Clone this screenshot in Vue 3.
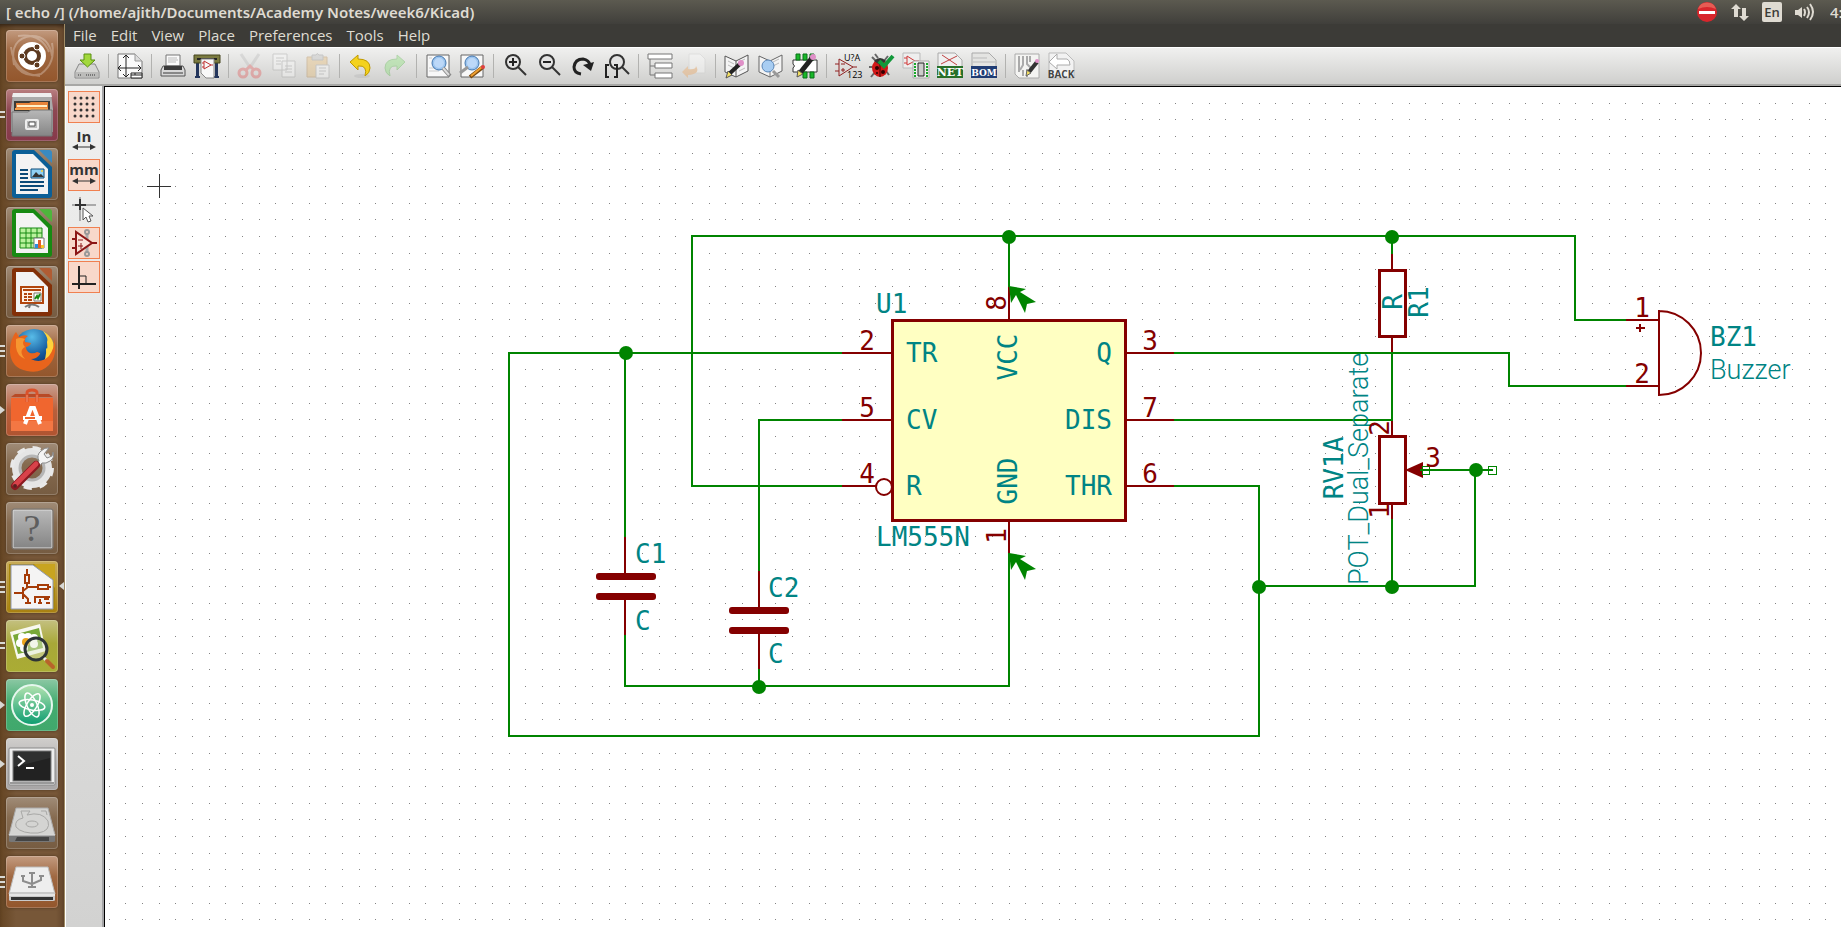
<script setup>
const menus = ['File', 'Edit', 'View', 'Place', 'Preferences', 'Tools', 'Help']

// Grid dots: three steps to every 50 px
let grid = ''
for (let r = 0; r < 130; r++) {
  for (let c = 0; c < 240; c++) {
    grid += `M${109 + Math.floor((c * 50) / 3)} ${103 + Math.floor((r * 50) / 3)}h1v1h-1z`
  }
}

const junctions = [
  [1009, 237], [1392, 237], [626, 353], [1476, 470], [1392, 587], [1259, 587], [759, 687],
]

const labels = [
  { t: 'U1', x: 876, y: 313 },
  { t: 'LM555N', x: 876, y: 546 },
  { t: 'TR', x: 906, y: 362 },
  { t: 'CV', x: 906, y: 429 },
  { t: 'R', x: 906, y: 495 },
  { t: 'Q', x: 1112, y: 362, a: 'end' },
  { t: 'DIS', x: 1112, y: 429, a: 'end' },
  { t: 'THR', x: 1112, y: 495, a: 'end' },
  { t: 'C1', x: 635, y: 563 },
  { t: 'C', x: 635, y: 630 },
  { t: 'C2', x: 768, y: 597 },
  { t: 'C', x: 768, y: 663 },
  { t: 'BZ1', x: 1710, y: 346 },
]
const turned = [
  { t: 'VCC', x: 1017, y: 357 },
  { t: 'GND', x: 1017, y: 481 },
  { t: 'R', x: 1402, y: 302 },
  { t: 'R1', x: 1428, y: 302 },
  { t: 'RV1A', x: 1343, y: 468 },
]
const pins = [
  { t: '2', x: 867, y: 350 }, { t: '5', x: 867, y: 417 }, { t: '4', x: 867, y: 483 },
  { t: '3', x: 1150, y: 350 }, { t: '7', x: 1150, y: 417 }, { t: '6', x: 1150, y: 483 },
  { t: '3', x: 1433, y: 467 }, { t: '1', x: 1642, y: 317 }, { t: '2', x: 1642, y: 383 },
]
const turnedPins = [
  { t: '8', x: 1006, y: 303 }, { t: '1', x: 1006, y: 536 },
  { t: '2', x: 1389, y: 428 }, { t: '1', x: 1389, y: 511 },
]
const turn = (p) => `translate(${p.x} ${p.y}) rotate(-90)`
</script>

<template>
  <div class="desktop">
    <header class="topbar">
      <h1 class="title">[ echo /] (/home/ajith/Documents/Academy Notes/week6/Kicad)</h1>
      <div class="tray">
        <svg width="22" height="24" viewBox="0 0 22 24">
          <circle cx="11" cy="12" r="10" fill="#d8262c" /><path d="M2 9a9.500 9.500 0 0 1 18 0q-9-4-18 0z" fill="#f08070" opacity=".6" />
          <rect x="3" y="11" width="16" height="3" fill="#fff" />
        </svg>
        <svg width="20" height="24" viewBox="0 0 20 24" fill="#dfdbd2">
          <path d="M6 4l5 5H8v8H4V9H1zM14 21l-5-5h3V8h4v8h3z" />
        </svg>
        <span class="lang">En</span>
        <svg width="22" height="24" viewBox="0 0 22 24" fill="none" stroke="#dfdbd2" stroke-width="2">
          <path d="M1 10h3l4-3v11l-4-3H1z" fill="#dfdbd2" stroke="none" />
          <path d="M10 9q2 3 0 7M13 7q4 5 0 11M16 4q6 8 0 16" />
        </svg>
        <span class="clock">4:</span>
      </div>
    </header>

    <div class="body">
      <nav class="launcher" aria-label="Launcher">
        <button class="tile copper" aria-label="Dash">
          <svg viewBox="0 0 52 52">
            <g fill="none" stroke="#fff" stroke-opacity=".28" stroke-width="2"><path d="M8 35Q3 8 26 6q17 0 20 20M46 13q4 20-11 31Q17 49 8 33M12 6Q35 3 43 22M5 17q3 27 29 29" /></g>
            <circle cx="26" cy="26" r="14" fill="#fff" />
            <circle cx="26" cy="26" r="7" fill="none" stroke="#5d3a20" stroke-width="4" />
            <g fill="#5d3a20" stroke="#fff"><circle cx="16" cy="26" r="3" /><circle cx="31" cy="17" r="3" /><circle cx="31" cy="35" r="3" /></g>
          </svg>
        </button>
        <button class="tile wine" aria-label="Files">
          <i class="pips two"></i>
          <svg viewBox="0 0 52 52">
            <path d="M7 4h38l2 16v23H5V20z" fill="#aaa" /><path d="M7 4h38l1 4H6z" fill="#eee" />
            <path d="M8 12h36v10H8z" fill="#3b3a36" /><path d="M10 14h13l2-1h17v8H10z" fill="#e8843a" /><path d="M11 17h30" stroke="#fff0c8" stroke-width="2" /><path d="M9 20h33" stroke="#f6a04c" stroke-width="2" />
            <path d="M6 23h16l3-2h21v26H6z" fill="url(#steel)" stroke="#777" />
            <rect x="20" y="31" width="12" height="9" rx="1" fill="#bbb" stroke="#eee" stroke-width="2" /><path d="M23 33h6v4h-6z" fill="#fff" stroke="#555" />
          </svg>
        </button>
        <button class="tile" aria-label="Writer">
          <svg viewBox="0 0 52 52">
            <path d="M9 2h19l18 17v28q0 3-3 3H9q-3 0-3-3V5q0-3 3-3z" fill="#0b5f97" /><path d="M33 2h10q3 0 3 3v10z" fill="#3a8ac0" />
            <path d="M10 6h17l15 15v25H10z" fill="#f3f3f3" />
            <path d="M14 22h8M14 26h8M14 30h8M14 34h24M14 38h24M14 42h18" stroke="#0b4a78" stroke-width="2" />
            <path d="M25 21h13v9H25z" fill="#8fd0f4" stroke="#0b4a78" /><path d="M26 29l4-5 3 3 2-1 3 3z" fill="#333" /><circle cx="36" cy="23" r="1" fill="#fc3" />
          </svg>
        </button>
        <button class="tile" aria-label="Calc">
          <svg viewBox="0 0 52 52">
            <path d="M9 2h19l18 17v28q0 3-3 3H9q-3 0-3-3V5q0-3 3-3z" fill="#178a12" /><path d="M33 2h10q3 0 3 3v10z" fill="#4fb53c" />
            <path d="M10 6h17l15 15v25H10z" fill="#f3f3f3" />
            <path d="M14 21h22v20H14z" fill="#b9f29c" stroke="#178a12" /><path d="M14 26h22M14 31h22M14 36h22M20 21v20M25 21v20M31 21v20" stroke="#178a12" />
            <path d="M28 31h10v10H28z" fill="#fff" stroke="#777" /><path d="M29 37h3v4h-3z" fill="#2a8ee0" /><path d="M32 33h3v8h-3z" fill="#e4602a" /><path d="M35 38h3v3h-3z" fill="#f7c52a" />
          </svg>
        </button>
        <button class="tile" aria-label="Impress">
          <svg viewBox="0 0 52 52">
            <path d="M9 2h19l18 17v28q0 3-3 3H9q-3 0-3-3V5q0-3 3-3z" fill="#833008" /><path d="M33 2h10q3 0 3 3v10z" fill="#b05c33" />
            <path d="M10 6h17l15 15v25H10z" fill="#f3f3f3" />
            <path d="M15 21h22v16H15z" fill="#fff3e8" stroke="#b2460e" stroke-width="2" /><path d="M17 24h18M18 28h3M18 31h3M18 34h3M22 28h4M22 31h4M22 34h4" stroke="#b2460e" stroke-width="2" />
            <path d="M28 27h7v8h-7z" fill="#fff" stroke="#777" /><path d="M29 33l2-3 1 2 2-4" fill="none" stroke="#178a12" stroke-width="2" />
            <path d="M19 41q7-5 14 0M24 39l-1 3" fill="none" stroke="#777" stroke-width="2" />
          </svg>
        </button>
        <button class="tile copper" aria-label="Firefox">
          <i class="pips"></i>
          <svg viewBox="0 0 52 52">
            <circle cx="28" cy="24" r="20" fill="url(#globe)" />
            <path d="M37 6q14 8 10 23-3 11-12 14 6-10 5-20 2 3 1-6 2-3-4-11z" fill="#ffd23c" />
            <path d="M7 12q1-3 3-5l3 5q5-3 9-1-4 2-3 6l6 1q-1 3-5 4 0 4 4 6 4 1 7-1 4 1 3 2-3 5-9 5 10 5 18-3 6-8 5-18 4 17-5 27-9 9-22 6Q5 43 4 27q0-9 3-15z" fill="#e8641c" />
            <path d="M10 14q4-2 9 0-4 4 0 8-7 4 0 12-8-3-9-12z" fill="#f79630" />
          </svg>
        </button>
        <button class="tile salmon" aria-label="Software">
          <i class="arrow"></i>
          <svg viewBox="0 0 52 52">
            <path d="M5 13l4-3h34l4 3z" fill="#b84a26" /><path d="M5 14h42v33H5z" fill="#f0662f" /><path d="M5 37h42v10H5z" fill="#f47c48" opacity=".8" />
            <path d="M21 18v-9q0-3 5-3t5 3v9" fill="none" stroke="#d9512a" stroke-width="3" /><path d="M21 18v-7M31 18v-7" stroke="#f7956c" />
            <path d="M19 40l6-16h3l6 16M17 34h19" fill="none" stroke="#fff" stroke-width="4" /><path d="M19 34h10" stroke="#f0662f" stroke-width="2" />
          </svg>
        </button>
        <button class="tile" aria-label="Settings">
          <svg viewBox="0 0 52 52">
            <circle cx="26" cy="25" r="16" fill="none" stroke="#e5e5e5" stroke-width="8" />
            <circle cx="26" cy="25" r="20" fill="none" stroke="#e9e9e9" stroke-width="4" stroke-dasharray="8 7.700" />
            <circle cx="26" cy="25" r="12" fill="none" stroke="#b5b5b5" stroke-width="3" />
            <path d="M29 23l4-5q-3-6 2-10 4-4 8-3l-5 6 3 4 5-2 1-4q2 6-3 9-4 3-8 2l-4 5z" fill="#f4f4f4" stroke="#888" />
            <path d="M9 43L30 22" stroke="#8a1a20" stroke-width="8" stroke-linecap="round" /><path d="M9 42L30 21" stroke="#d8424a" stroke-width="5" stroke-linecap="round" /><circle cx="9" cy="43" r="2" fill="#5c2020" />
          </svg>
        </button>
        <button class="tile" aria-label="Unknown application">
          <svg viewBox="0 0 52 52">
            <rect x="7" y="8" width="39" height="38" rx="1" fill="url(#steel)" stroke="#ddd" /><rect x="6" y="7" width="41" height="40" rx="2" fill="none" stroke="#777" />
            <text x="26" y="39" text-anchor="middle" font-family="Liberation Serif, serif" font-size="38" fill="#5e5e5e">?</text>
          </svg>
        </button>
        <button class="tile gold" aria-label="Schematic editor">
          <i class="pips"></i><i class="active-mark"></i>
          <svg viewBox="0 0 52 52">
            <path d="M3 3h46v46H3z" fill="#a8860c" /><path d="M28 3h21v24z" fill="#c8a420" /><path d="M5 4h22l20 15v29H5z" fill="#f4f4f4" stroke="#8f98ae" />
            <g fill="none" stroke="#a63c08" stroke-width="2"><path d="M21 8v6M19 14h4v8h-4zM21 22v6M17 26v12M8 32h9M17 30l5-4h10M32 24h10v4H32zM42 26h3M17 33l5 5v4M19 42h6M29 42v-6h15M34 38v4M38 38h5M32 42h4M40 42h4" /></g>
          </svg>
        </button>
        <button class="tile olive" aria-label="Image viewer">
          <i class="pips two"></i>
          <svg viewBox="0 0 52 52">
            <path d="M4 12l30-8 6 27-29 8z" fill="#f8f8f0" /><path d="M7 15l26-7 4 20-25 6z" fill="#78a838" />
            <g fill="#fff"><circle cx="16" cy="17" r="4" /><circle cx="22" cy="17" r="4" /><circle cx="28" cy="18" r="4" /><circle cx="14" cy="23" r="4" /><circle cx="18" cy="28" r="4" /><circle cx="28" cy="24" r="4" /></g>
            <circle cx="20" cy="22" r="4" fill="#eca41c" />
            <circle cx="30" cy="29" r="11" fill="#dfe8d0" fill-opacity=".45" stroke="#2e3436" stroke-width="3" /><path d="M38 38l4 4" stroke="#eee" stroke-width="3" /><path d="M41 41l6 6" stroke="#b8642a" stroke-width="4" stroke-linecap="round" />
          </svg>
        </button>
        <button class="tile green" aria-label="Atom">
          <i class="arrow"></i>
          <svg viewBox="0 0 52 52">
            <circle cx="26" cy="26" r="20" fill="url(#atom)" stroke="#e6f7ee" stroke-width="2" />
            <g fill="none" stroke="#fff" stroke-width="1.500"><ellipse cx="26" cy="26" rx="13" ry="5" transform="rotate(10 26 26)" /><ellipse cx="26" cy="26" rx="13" ry="5" transform="rotate(65 26 26)" /><ellipse cx="26" cy="26" rx="13" ry="5" transform="rotate(122 26 26)" /></g>
            <circle cx="26" cy="26" r="2" fill="#fff" />
          </svg>
        </button>
        <button class="tile silver" aria-label="Terminal">
          <i class="arrow"></i>
          <svg viewBox="0 0 52 52">
            <rect x="3" y="10" width="46" height="37" rx="1" fill="#eee" stroke="#888" /><path d="M4 45h44" stroke="#999" stroke-width="2" />
            <rect x="7" y="13" width="38" height="30" fill="#2f3030" stroke="#777" /><path d="M8 29L44 20v22H8z" fill="#222" />
            <path d="M12 18l6 5-6 5M20 30h8" fill="none" stroke="#fff" stroke-width="2" />
          </svg>
        </button>
        <button class="tile" aria-label="Hard disk">
          <svg viewBox="0 0 52 52">
            <path d="M10 11h32l7 27H3z" fill="#d4d4d2" stroke="#aaa" /><path d="M3 38h46v6q0 1-2 1H5q-2 0-2-1z" fill="#777" /><path d="M11 40h32v4H9z" fill="#444" /><path d="M3 38h46" stroke="#eee" />
            <g fill="none" stroke="#a8a8a6"><path d="M21 18q15-4 21 6 3 10-10 12-16 1-22-6-2-7 7-9l-2-7h9zM35 14h5l1 4" /><ellipse cx="26" cy="27" rx="6" ry="3" /></g>
          </svg>
        </button>
        <button class="tile copper" aria-label="USB drive">
          <i class="pips"></i>
          <svg viewBox="0 0 52 52">
            <path d="M10 11h32l7 27H3z" fill="#eee" stroke="#bbb" /><path d="M3 36h46v8q0 1-2 1H5q-2 0-2-1z" fill="#c9c9c9" /><path d="M5 41h42v3H5z" fill="#333" /><path d="M3 39h46" stroke="#fff" />
            <g fill="none" stroke="#8d8d8d" stroke-width="2"><path d="M26 30V16M22 31h8M26 28l-9-3v-5M26 28l9-4v-4M23 17h6M15 20h4M33 20h5" /></g>
          </svg>
        </button>
      </nav>

      <div class="window">
        <nav class="menubar" aria-label="Menu">
          <button v-for="m in menus" :key="m">{{ m }}</button>
        </nav>

        <div class="toolbar" role="toolbar" aria-label="Main tools">
          <button aria-label="Save"><svg viewBox="0 0 26 26"><path d="M5 11h16l4 8v6H1v-6z" fill="#d6d6d4" stroke="#888" /><path d="M2 19h22v5H2z" fill="#bcbcba" /><path d="M12 22h10M4 22h3" stroke="#777" stroke-dasharray="1 1" stroke-width="2" /><path d="M10 1h7v6h4l-7.500 7L6 7h4z" fill="#a2d83c" stroke="#5a9010" /></svg></button>
          <hr />
          <button aria-label="Page settings"><svg viewBox="0 0 26 26"><path d="M1 1h17l7 7v17H1z" fill="#fafafa" stroke="#777" /><path d="M18 1v7h7" fill="#ddd" stroke="#999" /><path d="M9 2v22M1 15h23M6 5l3-3 3 3M6 21l3 3 3-3M4 12l-3 3 3 3M21 12l3 3-3 3" fill="none" stroke="#222" /><path d="M14 20h11v5H14zM14 22h11M18 20v2" fill="#fff" stroke="#222" /></svg></button>
          <hr />
          <button aria-label="Print"><svg viewBox="0 0 26 26"><path d="M6 2h14v11H6z" fill="#fafafa" stroke="#777" /><path d="M8 5h9M8 7h10M8 9h8" stroke="#bbb" /><path d="M3 13h20l2 4v6H1v-6z" fill="#d8d8d8" stroke="#555" /><path d="M4 13h18v4H4z" fill="#3a3a3a" /><path d="M3 20h20" stroke="#888" stroke-width="2" /></svg></button>
          <button aria-label="Plot"><svg viewBox="0 0 26 26"><path d="M2 10h3v13h1v2H1v-2h1zM21 10h3v13h1v2h-5v-2h1z" fill="#24365c" /><path d="M0 2h26v8H0z" fill="#7a7a40" stroke="#44441c" /><path d="M3 6h20" stroke="#222" stroke-width="2" /><path d="M7 6h13v19h-8l-5-5z" fill="#f8f8f8" stroke="#888" /><path d="M10 8v8l7-4zM8 10h2M8 14h2M17 12h2" fill="none" stroke="#c03030" /></svg></button>
          <hr />
          <button class="off" aria-label="Cut"><svg viewBox="0 0 26 26"><path d="M4 1l10 15M22 1L12 16" stroke="#b8b8b8" stroke-width="3" /><circle cx="6" cy="20" r="4" fill="none" stroke="#e25050" stroke-width="3" /><circle cx="19" cy="20" r="4" fill="none" stroke="#e25050" stroke-width="3" /><path d="M9 17l4-4 4 4" fill="none" stroke="#e25050" stroke-width="3" /></svg></button>
          <button class="off" aria-label="Copy"><svg viewBox="0 0 26 26"><path d="M2 1h14v16H2zM11 8h13v16H11z" fill="#fff" stroke="#999" /><path d="M5 5h8M5 8h5M5 11h5M14 13h7M14 16h7M14 19h7" stroke="#999" /></svg></button>
          <button class="off" aria-label="Paste"><svg viewBox="0 0 26 26"><path d="M2 4h20v20H2z" fill="#e8b86a" stroke="#b08040" /><path d="M7 2h4q1-3 3 0h4v5H7z" fill="#bbb" stroke="#888" /><path d="M11 12h13v13H11z" fill="#fff" stroke="#999" /><path d="M14 15h7M14 18h7M14 21h5" stroke="#999" /></svg></button>
          <hr />
          <button aria-label="Undo"><svg viewBox="0 0 26 26"><ellipse cx="14" cy="23" rx="8" ry="2" fill="#bbb" opacity=".5" /><path d="M2 9l8-7v4q12 0 12 9 0 5-5 8 3-11-7-10v4z" fill="#f4d21c" stroke="#c09a00" /></svg></button>
          <button class="off" aria-label="Redo"><svg viewBox="0 0 26 26"><path d="M23 9l-8-7v4Q3 6 3 15q0 5 5 8-3-11 7-10v4z" fill="#7ee06a" stroke="#50b040" /></svg></button>
          <hr />
          <button aria-label="Find"><svg viewBox="0 0 26 26"><path d="M2 2h22v22H2z" fill="#f8f8f8" stroke="#666" stroke-width="1" /><path d="M4 5h3M4 15h6M4 18h10" stroke="#ccc" /><circle cx="14" cy="10" r="7" fill="#9cc4ee" stroke="#4478b0" /><circle cx="14" cy="10" r="5" fill="#bcd8f8" /><path d="M18 15l7 8" stroke="#888" stroke-width="4" /><path d="M18 15l6 7" stroke="#ddd" stroke-width="2" /></svg></button>
          <button aria-label="Find and replace"><svg viewBox="0 0 26 26"><path d="M2 2h22v22H2z" fill="#f8f8f8" stroke="#666" stroke-width="1" /><circle cx="13" cy="10" r="7" fill="#9cc4ee" stroke="#4478b0" /><circle cx="13" cy="10" r="5" fill="#bcd8f8" /><path d="M9 14l-8 6" stroke="#999" stroke-width="3" /><path d="M11 24l13-10" stroke="#7a4a10" stroke-width="4" /><path d="M12 23l11-9" stroke="#f0a030" stroke-width="2" /><circle cx="24" cy="14" r="2" fill="#e04040" /></svg></button>
          <hr />
          <button aria-label="Zoom in"><svg viewBox="0 0 26 26"><circle cx="11" cy="9" r="7" fill="#e4e4e4" stroke="#333" stroke-width="2" /><path d="M16 14l8 8" stroke="#333" stroke-width="2" /><path d="M7 9h8M11 5v8" stroke="#222" stroke-width="2" /></svg></button>
          <button aria-label="Zoom out"><svg viewBox="0 0 26 26"><circle cx="11" cy="9" r="7" fill="#e4e4e4" stroke="#333" stroke-width="2" /><path d="M16 14l8 8" stroke="#333" stroke-width="2" /><path d="M7 9h8" stroke="#222" stroke-width="2" /></svg></button>
          <button aria-label="Refresh"><svg viewBox="0 0 26 26"><path d="M11 21q-7-1-7-7 1-8 9-8 6 1 7 6" fill="none" stroke="#222" stroke-width="3" /><path d="M13 12l11-3-3 9z" fill="#222" /></svg></button>
          <button aria-label="Zoom to fit"><svg viewBox="0 0 26 26"><circle cx="13" cy="9" r="7" fill="#e4e4e4" stroke="#333" stroke-width="2" /><path d="M18 14l7 7" stroke="#333" stroke-width="2" /><path d="M5 12H2v12h3M10 12h3v12h-3" fill="none" stroke="#222" stroke-width="2" /></svg></button>
          <hr />
          <button aria-label="Hierarchy"><svg viewBox="0 0 26 26"><path d="M3 6v16h5M3 13h5" fill="none" stroke="#777" /><path d="M1 1h24v5H1zM8 10h17v5H8zM8 20h17v5H8z" fill="#fff" stroke="#777" /></svg></button>
          <button class="off" aria-label="Leave sheet"><svg viewBox="0 0 26 26"><path d="M8 1h11l5 5v14H8z" fill="#fff" stroke="#ccc" /><path d="M1 19l6-6v3q8 1 8-3 5 8-8 9v3z" fill="#f0a050" /></svg></button>
          <hr />
          <button aria-label="Library editor"><svg viewBox="0 0 26 26"><path d="M1 3l11 5 12-6v16l-12 6L1 19z" fill="#f4f4f4" stroke="#555" /><path d="M12 8v16" stroke="#555" /><path d="M4 8l6 3M4 12l6 3M15 9l6-3M15 18l6-3" stroke="#bbb" /><path d="M5 21L17 10" stroke="#222" stroke-width="4" /><path d="M2 25l2-7 4 4z" fill="#f4e060" stroke="#555" /><circle cx="17" cy="10" r="3" fill="#e090c8" /></svg></button>
          <button aria-label="Library browser"><svg viewBox="0 0 26 26"><path d="M1 3l11 5 12-6v16l-12 6L1 19z" fill="#f4f4f4" stroke="#666" /><path d="M12 8v16" stroke="#777" /><path d="M15 9l6-3M15 13l6-3" stroke="#bbb" /><circle cx="10" cy="13" r="6" fill="#a8cdf2" stroke="#5a86b8" /><path d="M15 18l6 6" stroke="#999" stroke-width="3" /></svg></button>
          <button aria-label="Footprint editor"><svg viewBox="0 0 26 26"><path d="M1 7h24v12H1v-4q3-2 0-4z" fill="#fff" stroke="#333" /><path d="M4 1h4v6H4zM11 1h4v6h-4zM18 1h4v6h-4zM11 19h4v6h-4zM18 19h4v6h-4z" fill="#18b828" stroke="#087018" /><path d="M8 20L20 5" stroke="#222" stroke-width="5" /><path d="M5 24l1-7 5 4z" fill="#f4e060" stroke="#555" /><circle cx="21" cy="4" r="3" fill="#e090c8" /></svg></button>
          <hr />
          <button aria-label="Annotate"><svg viewBox="0 0 26 26"><path d="M4 6v17l14-9zM0 11h4M0 18h4M18 14h4M6 11h4M6 17h4M8 15v4" fill="none" stroke="#902020" /><text x="9" y="8" class="tiny">U?A</text><text x="12" y="25" class="tiny">123</text></svg></button>
          <button aria-label="Rules check"><svg viewBox="0 0 26 26"><path d="M3 4l5 5M19 3l-4 5M0 14h6M2 24l4-5M20 22l-3-4M6 1l3 4" stroke="#666" stroke-width="2" /><ellipse cx="11" cy="15" rx="8" ry="9" fill="#d01818" /><path d="M5 8q6-6 12 0l-6 4z" fill="#333" /><path d="M11 10v14" stroke="#400" /><circle cx="8" cy="15" r="2" fill="#300" /><circle cx="8" cy="20" r="1" fill="#300" /><circle cx="14" cy="19" r="2" fill="#300" /><path d="M10 8l5 5 9-10" fill="none" stroke="#12983a" stroke-width="4" /></svg></button>
          <button aria-label="Assign footprints"><svg viewBox="0 0 26 26"><path d="M0 0h17v15H0z" fill="#eee" stroke="#bbb" /><path d="M4 3v9l8-4zM1 5h3M1 10h3M12 8h4" fill="none" stroke="#d03838" /><path d="M10 8h16v17H10z" fill="#f0f0f0" stroke="#aaa" /><path d="M15 10h6v13h-6z" fill="#ccc" stroke="#222" /><path d="M12 10v14M24 10v14" stroke="#18a828" stroke-width="2" stroke-dasharray="2 1" /></svg></button>
          <button aria-label="Netlist"><svg viewBox="0 0 26 26"><path d="M1 0h17l7 7v8H1z" fill="#f0f0f0" stroke="#aaa" /><path d="M5 2l15 10M4 11l16-8" stroke="#c04040" /><path d="M0 13h26v12H0z" fill="#287028" /><text x="13" y="23" class="plate" text-anchor="middle">NET</text></svg></button>
          <button aria-label="Bill of materials"><svg viewBox="0 0 26 26"><path d="M1 0h17l7 7v8H1z" fill="#e4e4e2" stroke="#aaa" /><path d="M2 5h14M2 9h22" stroke="#bbb" /><path d="M0 13h26v12H0z" fill="#203c74" /><text x="13" y="23" class="plate bom" text-anchor="middle">BOM</text></svg></button>
          <hr />
          <button aria-label="Board editor"><svg viewBox="0 0 26 26"><path d="M1 1h24v24H5l-4-4z" fill="#f4f4f2" stroke="#aaa" /><path d="M5 3v16M9 3v9l-3 5M13 3v8l4 4M9 17v6M13 16v8M16 3v6" fill="none" stroke="#aaa" stroke-width="2" /><path d="M15 19l8-10" stroke="#333" stroke-width="4" /><path d="M12 23l1-6 4 3z" fill="#f4e060" stroke="#666" /><circle cx="23" cy="8" r="2" fill="#e090c8" /></svg></button>
          <button aria-label="Back import"><svg viewBox="0 0 26 26"><path d="M1 0h17l8 8v17H1z" fill="#f2f2f2" stroke="#bbb" /><path d="M1 9l8-8v5h10q3 1 3 6H9v4z" fill="#fff" stroke="#aaa" /><text x="13" y="25" class="back" text-anchor="middle">BACK</text></svg></button>
        </div>

        <div class="work">
          <div class="options" role="toolbar" aria-label="Options">
            <button class="on" aria-label="Grid"><svg viewBox="0 0 30 30"><path d="M6 6h19M6 12h19M6 18h19M6 24h19" stroke="#333" stroke-width="3" stroke-linecap="round" stroke-dasharray="0 6" /></svg></button>
            <button aria-label="Inches"><svg viewBox="0 0 30 30"><text x="15" y="16" class="unit" text-anchor="middle">In</text><path d="M5 21h20" stroke="#333" /><path d="M3 21l6-3v6zM27 21l-6-3v6z" fill="#333" /></svg></button>
            <button class="on" aria-label="Millimetres"><svg viewBox="0 0 30 30"><text x="15" y="15" class="unit" text-anchor="middle">mm</text><path d="M5 21h20" stroke="#333" /><path d="M3 21l6-3v6zM27 21l-6-3v6z" fill="#333" /></svg></button>
            <button aria-label="Cursor shape"><svg viewBox="0 0 30 30"><path d="M3 11h24M11 3v24" stroke="#aaa" stroke-width="2" /><path d="M6 11h11M11 5v11" stroke="#333" stroke-width="2" /><path d="M14 14v12l3-3 2 5 3-1-2-5h4z" fill="#fff" stroke="#555" /></svg></button>
            <button class="on" aria-label="Hidden pins"><svg viewBox="0 0 30 30"><path d="M18 5v20" stroke="#aaa" stroke-width="3" /><circle cx="18" cy="4" r="2" fill="none" stroke="#999" stroke-width="2" /><circle cx="18" cy="26" r="2" fill="none" stroke="#999" stroke-width="2" /><path d="M7 4v22l16-11zM3 11h4M3 20h4M23 15h5" fill="#fbe4da" stroke="#8c1616" stroke-width="2" /><path d="M9 12h5M9 18h5M12 15v6" stroke="#8c1616" /></svg></button>
            <button class="on" aria-label="Orthogonal wires"><svg viewBox="0 0 30 30"><path d="M10 4v23M3 22h24" stroke="#222" stroke-width="2" /><path d="M10 14h7v8" fill="none" stroke="#222" /></svg></button>
          </div>

          <main class="sheet">
            <svg class="drawing" role="img" aria-label="Schematic">
              <g transform="translate(-105 -87)">
                <path :d="grid" class="dots" />
                <path class="cursor" d="M147 186h24M159 174v24" />

                <g class="wires">
                  <path d="M842 486H692V236H1575V320H1626" />
                  <path d="M842 353H509V736H1259V486H1174" />
                  <path d="M625 353V537M625 635V686H1009V553M1009 236V287" />
                  <path d="M842 420H759V571M759 669V686" />
                  <path d="M1174 353H1509V386H1626M1174 420H1392V353M1392 236V254" />
                  <path d="M1392 519V586M1259 586H1475V470M1425 470H1493" />
                </g>

                <g class="parts">
                  <path d="M842 353H892M842 420H892M842 486H876M1127 353H1174M1127 420H1174M1127 486H1174" />
                  <path d="M1009 287V320M1009 521V553" />
                  <path d="M625 537V574M625 599V635M759 571V608M759 633V669" />
                  <path d="M1392 254V270M1392 337V352M1392 421V436M1392 504V519" />
                  <path d="M1626 320H1659M1626 386H1659M1659 310V395A42 42 0 0 0 1659 311M1636 328H1645M1640 324V332" />
                  <circle cx="884" cy="487" r="8" />
                </g>
                <g class="solid">
                  <rect x="891" y="319" width="236" height="203" />
                  <rect x="1378" y="269" width="29" height="69" />
                  <rect x="1378" y="435" width="29" height="70" />
                  <rect x="596" y="573" width="60" height="7" rx="3" />
                  <rect x="596" y="593" width="60" height="7" rx="3" />
                  <rect x="729" y="607" width="60" height="7" rx="3" />
                  <rect x="729" y="627" width="60" height="7" rx="3" />
                  <path d="M1405 470l18-8v16z" />
                </g>
                <rect class="chip" x="894" y="322" width="230" height="197" />
                <rect class="hollow" x="1381" y="272" width="23" height="63" />
                <rect class="hollow" x="1381" y="438" width="23" height="64" />

                <g class="marks">
                  <circle v-for="(j, i) in junctions" :key="i" :cx="j[0]" :cy="j[1]" r="7" />
                  <path v-for="y in [286, 553]" :key="y" :transform="`translate(1009 ${y})`" d="M0 0L17 3 11 6 27 16 18 18 16 27 7 9 2 17z" />
                </g>
                <path class="wires" d="M1420 470H1430" />
                <g class="ends">
                  <rect x="1422" y="466" width="7" height="8" />
                  <rect x="1488" y="466" width="8" height="8" />
                </g>

                <g class="label">
                  <text v-for="(l, i) in labels" :key="i" :x="l.x" :y="l.y" :text-anchor="l.a || 'start'">{{ l.t }}</text>
                  <text v-for="(l, i) in turned" :key="'t' + i" :transform="turn(l)" text-anchor="middle">{{ l.t }}</text>
                  <text class="word" x="1710" y="379">Buzzer</text>
                  <text class="word" transform="translate(1368 469) rotate(-90)" text-anchor="middle">POT_Dual_Separate</text>
                </g>
                <g class="pin">
                  <text v-for="(p, i) in pins" :key="i" :x="p.x" :y="p.y">{{ p.t }}</text>
                  <text v-for="(p, i) in turnedPins" :key="'t' + i" :transform="turn(p)">{{ p.t }}</text>
                </g>
              </g>
            </svg>
          </main>
        </div>
      </div>
    </div>

    <svg class="defs" width="0" height="0" aria-hidden="true">
      <linearGradient id="steel" x1="0" y1="0" x2="0" y2="1"><stop offset="0" stop-color="#b8b8b8" /><stop offset="1" stop-color="#858585" /></linearGradient>
      <radialGradient id="globe" cx=".45" cy=".2" r=".8"><stop offset="0" stop-color="#58bce8" /><stop offset=".6" stop-color="#14589c" /><stop offset="1" stop-color="#0a2c60" /></radialGradient>
      <linearGradient id="atom" x1="0" y1="0" x2="0" y2="1"><stop offset="0" stop-color="#b4e4b0" /><stop offset="1" stop-color="#0c9c70" /></linearGradient>
    </svg>
  </div>
</template>

<style>
html,
body {
  overflow: hidden;
}
</style>

<style scoped>
.desktop {
  display: flex;
  flex-direction: column;
  height: 100vh;
  font-family: "Open Sans", "Noto Sans", sans-serif;
  overflow: hidden;
}
button {
  border: 0;
  padding: 0;
  margin: 0;
  background: none;
  font: inherit;
  color: inherit;
}
.topbar {
  display: flex;
  justify-content: space-between;
  align-items: center;
  flex: none;
  height: 24px;
  padding-left: 6px;
  background: linear-gradient(#5c5a50, #403f3b);
  color: #dfdbd2;
  white-space: nowrap;
}
.title {
  margin: 0;
  font-family: "Noto Sans", sans-serif;
  font-size: 15px;
  line-height: 24px;
  font-weight: 600;
}
.tray {
  display: flex;
  align-items: center;
  gap: 12px;
}
.lang {
  width: 20px;
  height: 20px;
  border-radius: 2px;
  background: #dfdbd2;
  color: #3c3b37;
  font-size: 13px;
  line-height: 20px;
  font-weight: 600;
  text-align: center;
}
.clock {
  width: 11px;
  margin-left: 2px;
  overflow: hidden;
  font-size: 15px;
  line-height: 24px;
  font-weight: 600;
}
.body {
  display: flex;
  flex: 1;
  min-height: 0;
}
.launcher {
  display: flex;
  flex-direction: column;
  gap: 7px;
  flex: none;
  width: 58px;
  padding: 6px 0 0 6px;
  border-right: 1px solid #a08c66;
  background: linear-gradient(90deg, #654523, #775738 16px, #775738 56px, #65472c);
  box-shadow: inset 0 5px 5px -3px #2f2013;
}
.tile {
  position: relative;
  flex: none;
  width: 52px;
  height: 52px;
  border-radius: 4px;
  background: linear-gradient(#a08c78, #866b50 40%, #765c42);
  box-shadow: inset 0 0 0 1px rgba(255, 255, 255, 0.2), 0 0 3px #4a331d;
}
.tile svg {
  display: block;
  width: 52px;
  height: 52px;
}
.copper { background: linear-gradient(#c39b80, #a06942 40%, #93562c); }
.wine { background: linear-gradient(#b97f80, #8e4852 40%, #86384a); }
.salmon { background: linear-gradient(#c99f90, #b8603c 50%, #b05430); }
.gold { background: linear-gradient(#c8ac58, #a88010); }
.olive { background: linear-gradient(#c4c080, #a8a838 45%, #aaac34); }
.green { background: linear-gradient(#8cc8a4, #44ac70 45%, #40a86c); }
.silver { background: linear-gradient(#d0cecc, #b4b2b2 50%, #a8a6a6); }
.pips {
  position: absolute;
  left: -6px;
  top: 20px;
  width: 5px;
  height: 12px;
  background: repeating-linear-gradient(#d8d8d4 0 2px, transparent 2px 5px);
}
.two {
  top: 22px;
  height: 7px;
}
.arrow {
  position: absolute;
  left: -6px;
  top: 22px;
  border: 4px solid transparent;
  border-left: 5px solid #d8d8d4;
  border-right: 0;
}
.active-mark {
  position: absolute;
  right: -6px;
  top: 21px;
  border: 4px solid transparent;
  border-right: 5px solid #d8d8d4;
  border-left: 0;
}
.window {
  display: flex;
  flex-direction: column;
  flex: 1;
  min-width: 0;
}
.menubar {
  display: flex;
  gap: 14px;
  flex: none;
  height: 23px;
  padding-left: 8px;
  background: #3c3b37;
  color: #dfdbd2;
  font-size: 15px;
  line-height: 23px;
}
.toolbar {
  display: flex;
  align-items: center;
  flex: none;
  height: 36px;
  padding-left: 5px;
  border-top: 1px solid #fff;
  border-bottom: 2px solid #a8a8a6;
  background: linear-gradient(#f0f0ef, #cfcfcd);
}
.toolbar button {
  display: flex;
  justify-content: center;
  flex: none;
  width: 34px;
}
.toolbar svg {
  width: 26px;
  height: 26px;
  overflow: visible;
}
.toolbar hr {
  flex: none;
  width: 1px;
  height: 24px;
  margin: 0 4px;
  border: 0;
  background: #b2b2b0;
}
.off {
  opacity: 0.35;
}
.tiny {
  font: 9px "Open Sans", sans-serif;
}
.plate {
  font: bold 11px "DejaVu Serif", serif;
  fill: #fff;
}
.bom {
  font-size: 9px;
}
.back {
  font: bold 10px "Open Sans", sans-serif;
  fill: #444;
}
.work {
  display: flex;
  flex: 1;
  min-height: 0;
}
.options {
  display: flex;
  flex-direction: column;
  gap: 2px;
  flex: none;
  width: 34px;
  padding: 5px 0 0 2px;
  border-left: 1px solid #fff;
  border-right: 2px solid #a4a4a6;
  background: linear-gradient(#f0f0ef, #d2d2d1);
}
.options button {
  display: flex;
  flex: none;
  box-sizing: border-box;
  width: 32px;
  height: 32px;
  border: 1px solid transparent;
}
.options .on {
  background: #f8d8ca;
  border-color: #f08050;
}
.options svg {
  width: 30px;
  height: 30px;
}
.unit {
  font: bold 15px "Open Sans", sans-serif;
  fill: #333;
}
.sheet {
  flex: 1;
  min-width: 0;
  border-top: 1px solid #000;
  border-left: 1px solid #000;
  background: #fff;
  overflow: hidden;
}
.drawing {
  display: block;
  width: 100%;
  height: 100%;
}
.dots {
  fill: #848484;
  shape-rendering: crispEdges;
}
.cursor {
  stroke: #333;
  shape-rendering: crispEdges;
}
.wires {
  fill: none;
  stroke: #008400;
  stroke-width: 2px;
}
.parts {
  fill: none;
  stroke: #840000;
  stroke-width: 2px;
}
.solid {
  fill: #840000;
}
.chip {
  fill: #ffffc2;
}
.hollow {
  fill: #fff;
}
.marks {
  fill: #008400;
}
.ends {
  fill: none;
  stroke: #008400;
  shape-rendering: crispEdges;
}
.label {
  font: 26px "DejaVu Sans Mono", monospace;
  fill: #008484;
}
.label .word {
  font-family: Roboto, sans-serif;
  font-size: 27px;
  font-weight: 300;
}
.pin {
  font: 26px "DejaVu Sans Mono", monospace;
  fill: #840000;
  text-anchor: middle;
}
.defs {
  position: absolute;
}
</style>
